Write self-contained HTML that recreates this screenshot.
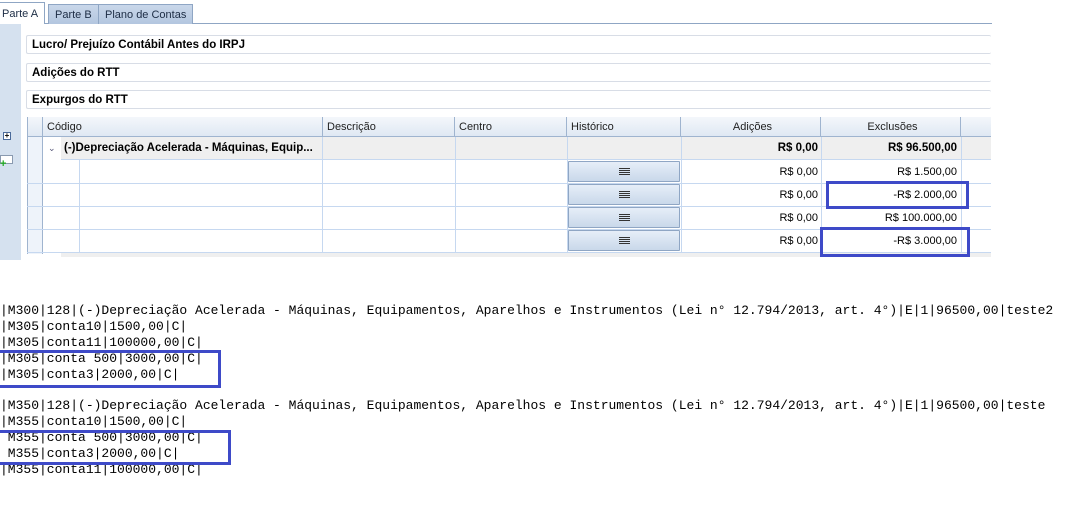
<!DOCTYPE html>
<html><head><meta charset="utf-8"><style>
*{margin:0;padding:0;box-sizing:border-box}
body{width:1073px;height:520px;background:#fff;position:relative;overflow:hidden;font-family:"Liberation Sans","DejaVu Sans",sans-serif;font-size:11px;color:#000}
.a{position:absolute}
.tab{position:absolute;top:4px;height:20px;border:1px solid #8fa6c4;border-bottom:none;background:linear-gradient(#c9d7ea,#b3c6df);padding:4px 6px 0;font-size:11px;color:#1c2c44}
.fld{position:absolute;left:26px;width:965px;height:19px;border:1px solid #d8dde6;border-right:none;border-radius:2px;font-weight:bold;padding:3px 0 0 5px;font-size:11.5px}
.h{position:absolute;top:117px;height:20px;background:linear-gradient(#f4f7fb,#dfe8f3);border-right:1px solid #9fb4cf;border-bottom:1px solid #9fb4cf;padding:4px 0 0 4px;color:#222}
.vl{position:absolute;width:1px;background:#c6d8f0}
.hl{position:absolute;height:1px;background:#c6d8f0}
.btn{position:absolute;left:568px;width:112px;height:21px;border:1px solid #8fa6c4;background:linear-gradient(#e6eef8,#c9d8ea);border-radius:1px}
.btn i{position:absolute;left:50px;top:6px;width:11px;height:8px;background:repeating-linear-gradient(#333 0 1px,transparent 1px 2px)}
.n{position:absolute;text-align:right}
pre{position:absolute;left:0;font-family:"Liberation Mono",monospace;font-size:13px;line-height:15.9px;color:#000}
.box{position:absolute;border:3px solid #3e4ac8}
</style></head><body>
<div class="a" style="left:0;top:23px;width:992px;height:1px;background:#8fa6c4"></div>
<div class="tab" style="left:0;top:2px;height:22px;background:#fff;border-color:#8fa6c4;border-left:none;padding-left:2px;padding-top:5px">Parte A</div>
<div class="tab" style="left:48px">Parte B</div>
<div class="tab" style="left:98px">Plano de Contas</div>
<div class="a" style="left:0;top:24px;width:21px;height:236px;background:#d5e1ef"></div>
<div class="a" style="left:3px;top:132px;width:8px;height:8px;border:1px solid #4a6a9a;background:#fff;font-size:8px;line-height:6px;text-align:center;font-weight:bold">+</div>
<div class="a" style="left:0;top:155px;width:13px;height:9px;border:1px solid #8a9ab0;background:#fff"></div>
<div class="a" style="left:0;top:158px;color:#2a2;font-weight:bold;font-size:11px">+</div>

<div class="fld" style="top:35px">Lucro/ Prejuízo Contábil Antes do IRPJ</div>
<div class="fld" style="top:63px">Adições do RTT</div>
<div class="fld" style="top:90px">Expurgos do RTT</div>

<div class="h" style="left:27px;width:16px;border-left:1px solid #9fb4cf"></div>
<div class="h" style="left:43px;width:280px">Código</div>
<div class="h" style="left:323px;width:132px">Descrição</div>
<div class="h" style="left:455px;width:112px">Centro</div>
<div class="h" style="left:567px;width:114px">Histórico</div>
<div class="h" style="left:681px;width:140px;text-align:center">Adições</div>
<div class="h" style="left:821px;width:140px;text-align:center">Exclusões</div>
<div class="h" style="left:961px;width:30px;border-right:none"></div>

<div class="a" style="left:27px;top:137px;width:16px;height:117px;background:#eef3fa;border-right:1px solid #9fb4cf;border-left:1px solid #9fb4cf"></div>
<div class="a" style="left:61px;top:137px;width:930px;height:23px;background:#efefef;border-bottom:1px solid #c6d8f0"></div>
<div class="a" style="left:48px;top:143px;font-size:9px;color:#557">&#8964;</div>
<div class="a" style="left:64px;top:142px;font-weight:bold;font-size:11.5px">(-)Depreciação Acelerada - Máquinas, Equip...</div>
<div class="n" style="left:681px;width:137px;top:142px;font-weight:bold;font-size:11.5px">R$ 0,00</div>
<div class="n" style="left:821px;width:136px;top:142px;font-weight:bold;font-size:11.5px">R$ 96.500,00</div>
<div class="vl" style="left:79px;top:160px;height:94px"></div>
<div class="vl" style="left:322px;top:137px;height:117px"></div>
<div class="vl" style="left:455px;top:137px;height:117px"></div>
<div class="vl" style="left:567px;top:137px;height:117px"></div>
<div class="vl" style="left:681px;top:137px;height:117px"></div>
<div class="vl" style="left:821px;top:137px;height:117px"></div>
<div class="vl" style="left:961px;top:137px;height:117px"></div>
<div class="hl" style="left:27px;top:183px;width:964px"></div>
<div class="hl" style="left:27px;top:206px;width:964px"></div>
<div class="hl" style="left:27px;top:229px;width:964px"></div>
<div class="hl" style="left:27px;top:252px;width:964px"></div>
<div class="a" style="left:61px;top:253px;width:930px;height:4px;background:#efefef"></div>

<div class="btn" style="top:161px"><i></i></div>
<div class="btn" style="top:184px"><i></i></div>
<div class="btn" style="top:207px"><i></i></div>
<div class="btn" style="top:230px"><i></i></div>
<div class="n" style="left:681px;width:137px;top:166px">R$ 0,00</div>
<div class="n" style="left:681px;width:137px;top:189px">R$ 0,00</div>
<div class="n" style="left:681px;width:137px;top:212px">R$ 0,00</div>
<div class="n" style="left:681px;width:137px;top:235px">R$ 0,00</div>
<div class="n" style="left:821px;width:136px;top:166px">R$ 1.500,00</div>
<div class="n" style="left:821px;width:136px;top:189px">-R$ 2.000,00</div>
<div class="n" style="left:821px;width:136px;top:212px">R$ 100.000,00</div>
<div class="n" style="left:821px;width:136px;top:235px">-R$ 3.000,00</div>
<div class="box" style="left:826px;top:181px;width:143px;height:28px"></div>
<div class="box" style="left:820px;top:227px;width:150px;height:30px"></div>

<pre style="top:303px">|M300|128|(-)Depreciação Acelerada - Máquinas, Equipamentos, Aparelhos e Instrumentos (Lei n° 12.794/2013, art. 4°)|E|1|96500,00|teste2
|M305|conta10|1500,00|C|
|M305|conta11|100000,00|C|
|M305|conta 500|3000,00|C|
|M305|conta3|2000,00|C|

|M350|128|(-)Depreciação Acelerada - Máquinas, Equipamentos, Aparelhos e Instrumentos (Lei n° 12.794/2013, art. 4°)|E|1|96500,00|teste
|M355|conta10|1500,00|C|
 M355|conta 500|3000,00|C|
 M355|conta3|2000,00|C|
|M355|conta11|100000,00|C|</pre>
<div class="box" style="left:-3px;top:350px;width:224px;height:38px"></div>
<div class="box" style="left:-3px;top:430px;width:234px;height:35px"></div>
</body></html>
